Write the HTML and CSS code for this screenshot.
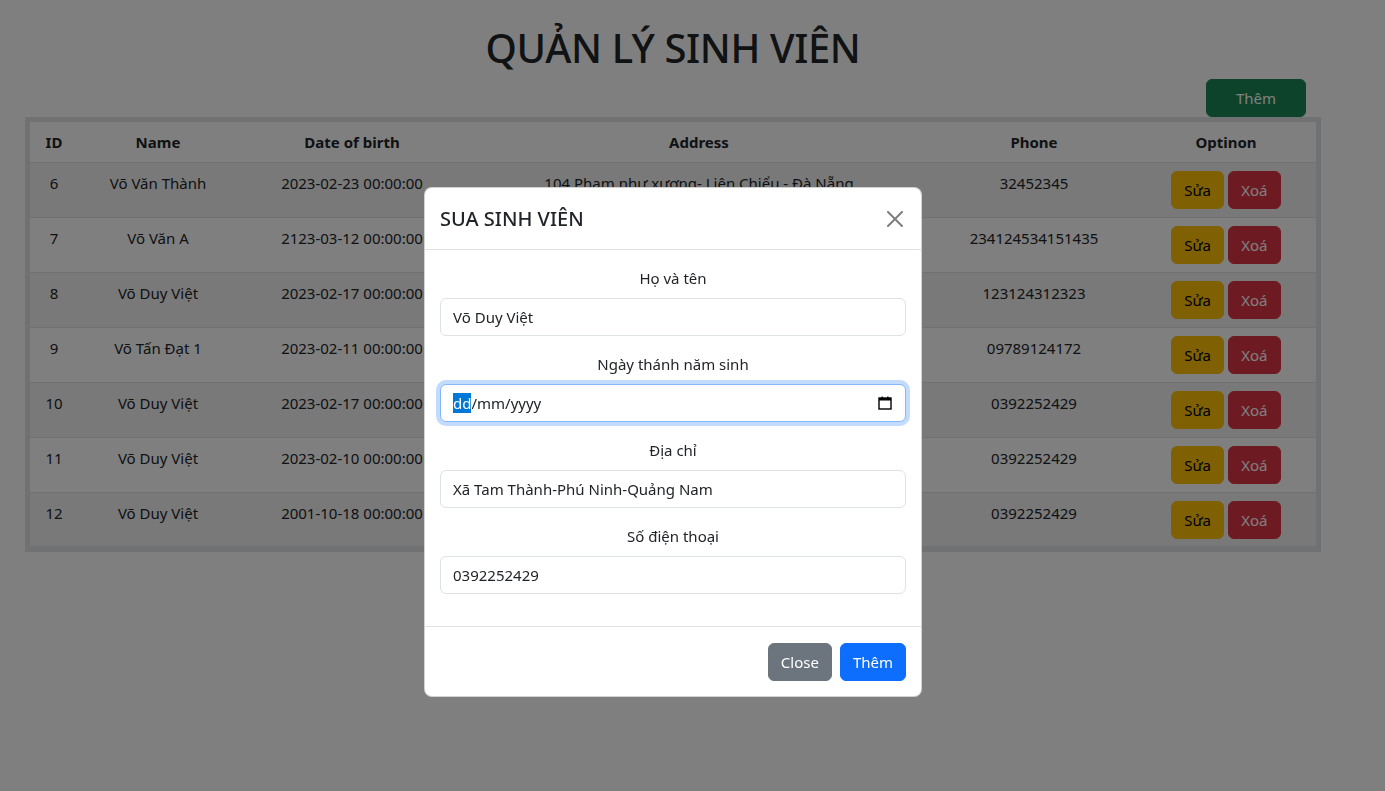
FILE: index.html
```html
<!DOCTYPE html>
<html lang="vi">
<head>
<meta charset="utf-8">
<title>Quản lý sinh viên</title>
<link rel="stylesheet" href="styles.css">
</head>
<body>
<div class="page">
  <h1 class="title">QUẢN LÝ SINH VIÊN</h1>
  <div class="toolbar">
    <button class="btn btn-success btn-add">Thêm</button>
  </div>
  <table class="table">
    <colgroup>
      <col class="c-id"><col class="c-name"><col class="c-dob"><col class="c-addr"><col class="c-phone"><col class="c-opt">
    </colgroup>
    <thead>
      <tr><th>ID</th><th>Name</th><th>Date of birth</th><th>Address</th><th>Phone</th><th>Optinon</th></tr>
    </thead>
    <tbody>
      <tr><td>6</td><td>Võ Văn Thành</td><td>2023-02-23 00:00:00</td><td>104 Phạm như xương- Liên Chiểu - Đà Nẵng</td><td>32452345</td><td><button class="btn btn-warning">Sửa</button> <button class="btn btn-danger">Xoá</button></td></tr>
      <tr><td>7</td><td>Võ Văn A</td><td>2123-03-12 00:00:00</td><td>Quảng Nam</td><td>234124534151435</td><td><button class="btn btn-warning">Sửa</button> <button class="btn btn-danger">Xoá</button></td></tr>
      <tr><td>8</td><td>Võ Duy Việt</td><td>2023-02-17 00:00:00</td><td>Quảng Nam</td><td>123124312323</td><td><button class="btn btn-warning">Sửa</button> <button class="btn btn-danger">Xoá</button></td></tr>
      <tr><td>9</td><td>Võ Tấn Đạt 1</td><td>2023-02-11 00:00:00</td><td>Quảng Nam</td><td>09789124172</td><td><button class="btn btn-warning">Sửa</button> <button class="btn btn-danger">Xoá</button></td></tr>
      <tr><td>10</td><td>Võ Duy Việt</td><td>2023-02-17 00:00:00</td><td>Quảng Nam</td><td>0392252429</td><td><button class="btn btn-warning">Sửa</button> <button class="btn btn-danger">Xoá</button></td></tr>
      <tr><td>11</td><td>Võ Duy Việt</td><td>2023-02-10 00:00:00</td><td>Quảng Nam</td><td>0392252429</td><td><button class="btn btn-warning">Sửa</button> <button class="btn btn-danger">Xoá</button></td></tr>
      <tr><td>12</td><td>Võ Duy Việt</td><td>2001-10-18 00:00:00</td><td>Xã Tam Thành-Phú Ninh-Quảng Nam</td><td>0392252429</td><td><button class="btn btn-warning">Sửa</button> <button class="btn btn-danger">Xoá</button></td></tr>
    </tbody>
  </table>
</div>

<div class="backdrop"></div>

<div class="modal">
  <div class="modal-dialog">
    <div class="modal-header">
      <h5 class="modal-title">SUA SINH VIÊN</h5>
      <button class="btn-close" aria-label="Close">
        <svg width="16" height="16" viewBox="0 0 16 16"><path d="M.293.293a1 1 0 0 1 1.414 0L8 6.586 14.293.293a1 1 0 1 1 1.414 1.414L9.414 8l6.293 6.293a1 1 0 0 1-1.414 1.414L8 9.414l-6.293 6.293a1 1 0 0 1-1.414-1.414L6.586 8 .293 1.707a1 1 0 0 1 0-1.414z"/></svg>
      </button>
    </div>
    <div class="modal-body">
      <div class="field">
        <label class="form-label">Họ và tên</label>
        <div class="form-control">Võ Duy Việt</div>
      </div>
      <div class="field">
        <label class="form-label">Ngày thánh năm sinh</label>
        <div class="form-control date focus">
          <span class="date-text"><span class="sel">dd</span>/mm/yyyy</span>
          <svg class="cal" width="14" height="14" viewBox="0 0 14 14"><rect x="1" y="2" width="12" height="11" fill="none" stroke="#000" stroke-width="1.4"/><rect x="1" y="2" width="12" height="2.5" fill="#000"/><rect x="3.5" y="0.5" width="1.3" height="2" fill="#000"/><rect x="9.2" y="0.5" width="1.3" height="2" fill="#000"/></svg>
        </div>
      </div>
      <div class="field">
        <label class="form-label">Địa chỉ</label>
        <div class="form-control">Xã Tam Thành-Phú Ninh-Quảng Nam</div>
      </div>
      <div class="field">
        <label class="form-label">Số điện thoại</label>
        <div class="form-control">0392252429</div>
      </div>
    </div>
    <div class="modal-footer">
      <button class="btn btn-secondary">Close</button>
      <button class="btn btn-primary">Thêm</button>
    </div>
  </div>
</div>
</body>
</html>
```

FILE: styles.css
```css
* { box-sizing: border-box; }
html, body { margin: 0; padding: 0; }
body {
  font-family: "Noto Sans", "Open Sans", sans-serif;
  font-size: 15px;
  line-height: 24px;
  color: #212529;
  background: #fff;
}
.page {
  width: 1296px;
  margin-left: 25px;
}
.title {
  margin: 24px 0 0;
  font-size: 40px;
  line-height: 48px;
  font-weight: 500;
  text-align: center;
  letter-spacing: -0.4px;
}
.toolbar {
  display: flex;
  justify-content: flex-end;
  padding-right: 15px;
  margin-top: 7px;
}
.btn {
  display: inline-block;
  font-family: inherit;
  font-size: 15px;
  line-height: 24px;
  padding: 6px 12px;
  border: 1px solid transparent;
  border-radius: 6px;
  cursor: pointer;
}
.btn-add { width: 100px; }
.btn-success { background: #198754; color: #fff; border-color: #198754; }
.btn-warning { background: #ffc107; color: #000; border-color: #ffc107; }
.btn-danger { background: #dc3545; color: #fff; border-color: #dc3545; min-width: 53px; }
.btn-secondary { background: #6c757d; color: #fff; border-color: #6c757d; }
.btn-primary { background: #0d6efd; color: #fff; border-color: #0d6efd; }

.table {
  width: 100%;
  table-layout: fixed;
  border: 5px solid #dee2e6;
  border-collapse: separate;
  border-spacing: 0;
}
.c-id { width: 48px; }
.c-name { width: 160px; }
.c-dob { width: 228px; }
.c-addr { width: 466px; }
.c-phone { width: 204px; }
.c-opt { width: 180px; }
.table th, .table td {
  padding: 8px;
  text-align: center;
  vertical-align: top;
  border-bottom: 1px solid #dee2e6;
  white-space: nowrap;
}
.table th { font-weight: 700; }
.table tbody tr:last-child td { padding-bottom: 7px; }
.table tbody tr:nth-child(odd) td { background: rgba(0,0,0,.05); }
.table td .btn { margin: 0; }

.backdrop {
  position: fixed;
  inset: 0;
  background: rgba(0,0,0,.5);
}
.modal {
  position: fixed;
  inset: 0;
}
.modal-dialog {
  width: 498px;
  margin: 187px 0 0 424px;
  background: #fff;
  border: 1px solid rgba(0,0,0,.175);
  border-radius: 8px;
}
.modal-header {
  display: flex;
  align-items: center;
  padding: 16px 15px 15px 15px;
  border-bottom: 1px solid #dee2e6;
}
.modal-title {
  margin: 0;
  font-size: 20px;
  line-height: 30px;
  font-weight: 500;
}
.btn-close {
  margin-left: auto;
  margin-right: -1px;
  width: 24px;
  height: 24px;
  padding: 4px;
  border: 0;
  background: transparent;
  opacity: .5;
  display: flex;
  align-items: center;
  justify-content: center;
}
.btn-close svg { fill: #000; }
.modal-body {
  padding: 16px 15px 16px 15px;
}
.field { margin-bottom: 16px; }
.form-label {
  display: block;
  text-align: center;
  margin-bottom: 8px;
}
.form-control {
  height: 38px;
  padding: 6px 12px;
  border: 1px solid #dee2e6;
  border-radius: 6px;
  font-size: 15px;
  line-height: 24px;
  background: #fff;
}
.form-control.focus {
  border-color: #86b7fe;
  box-shadow: 0 0 0 4px rgba(13,110,253,.25);
}
.date {
  display: flex;
  align-items: center;
  justify-content: space-between;
}
.date-text { color: #212529; }
.sel { background: #0078d7; color: #fff; }
.cal { margin-right: 1px; }
.modal-footer {
  display: flex;
  justify-content: flex-end;
  gap: 8px;
  padding: 16px 15px 15px;
  border-top: 1px solid #dee2e6;
}
```
